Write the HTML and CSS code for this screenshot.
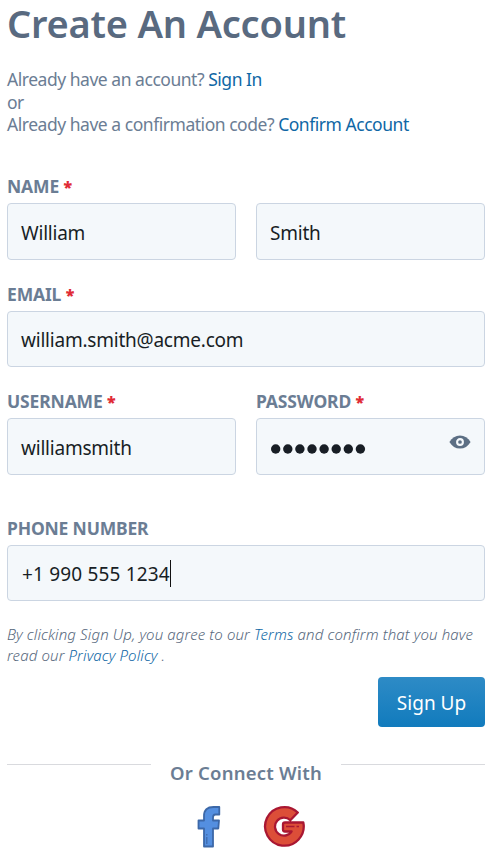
FILE: index.html
```html
<!DOCTYPE html>
<html lang="en">
<head>
<meta charset="utf-8">
<title>Create An Account</title>
<link rel="stylesheet" href="styles.css">
</head>
<body>
<main class="signup">
  <h1 class="title">Create An Account</h1>
  <p class="intro">Already have an account? <a href="#">Sign In</a><br>or<br>Already have a confirmation code? <a href="#">Confirm Account</a></p>
  <form class="form">
    <div class="row row-name">
      <div class="field"><label class="label">NAME <b>*</b></label><div class="input">William</div></div>
      <div class="field field-end"><div class="input">Smith</div></div>
    </div>
    <div class="field row-email"><label class="label">EMAIL <b>*</b></label><div class="input">william.smith@acme.com</div></div>
    <div class="row row-login">
      <div class="field"><label class="label">USERNAME <b>*</b></label><div class="input">williamsmith</div></div>
      <div class="field"><label class="label">PASSWORD <b>*</b></label>
        <div class="input input-password">
          <svg class="dots" width="98" height="12" viewBox="0 0 98 12" fill="#181e25"><circle cx="5.700" cy="6" r="4.700"/><circle cx="17.800" cy="6" r="4.700"/><circle cx="29.900" cy="6" r="4.700"/><circle cx="42" cy="6" r="4.700"/><circle cx="54.100" cy="6" r="4.700"/><circle cx="66.200" cy="6" r="4.700"/><circle cx="78.300" cy="6" r="4.700"/><circle cx="90.400" cy="6" r="4.700"/></svg>
          <svg class="eye" width="22" height="14" viewBox="0 0 22 14"><path d="M.4 7C3 2.700 6.500.4 11 .4S19 2.700 21.600 7C19 11.300 15.500 13.600 11 13.600S3 11.300.4 7Z" fill="#5c6f84"/><circle cx="11" cy="7" r="2.900" fill="none" stroke="#f4f8fb" stroke-width="2.100"/></svg>
        </div>
      </div>
    </div>
    <div class="field row-phone"><label class="label label-phone">PHONE NUMBER</label><div class="input input-phone"><span>+1 990 555 1234</span><span class="caret"></span></div></div>
    <p class="legal">By clicking Sign Up, you agree to our <a href="#">Terms</a> and confirm that you have<br>read our <a href="#">Privacy Policy</a> .</p>
    <button class="submit" type="button">Sign Up</button>
  </form>
  <div class="divider"><span>Or Connect With</span></div>
  <div class="social">
    <svg width="24" height="43" viewBox="0 0 24 43"><path d="M7 41.500V23.500H1.500V15.500H7V11Q7 2 16.500 2H22.300V9.500H18.500Q16 9.500 16 12.500V15.500H22L21.300 23.500H16V41.500Z" fill="#548fe0" stroke="#3c68a8" stroke-width="1.800" stroke-linejoin="round"/><path d="M9.800 29V30.500M9.800 32V39" stroke="#3c68a8" stroke-width="1.200"/></svg>
    <svg width="42" height="43" viewBox="0 0 42 43"><path d="M34.800 7.500A19.300 19.300 0 1 0 40.300 17.500H22Q20 17.500 20 19.500V24.500Q20 26.500 22 26.500H28.600A9 9 0 1 1 27.300 15.200Z" fill="#dc4e38" stroke="#a91732" stroke-width="2.300" stroke-linejoin="round"/><path d="M23 21.500H31.500M33.500 21.500H36" stroke="#a91732" stroke-width="1.700"/></svg>
  </div>
</main>
</body>
</html>
```
FILE: styles.css
```css
* { box-sizing: border-box; }
body { margin: 0; background: #fff; color: #6b7d94; font-family: "Noto Sans", sans-serif; }
a { color: #0f67a5; text-decoration: none; }
.signup { padding: 0 10px 0 7px; }
.title { margin: 0; height: 68px; line-height: 46px; font-size: 38px; font-weight: 600; color: #596a80; white-space: nowrap; letter-spacing: -.22px; }
.intro { margin: 0; height: 107px; line-height: 22.500px; font-size: 17.500px; white-space: nowrap; letter-spacing: -.47px; }
.row { display: grid; grid-template-columns: 229px 229px; gap: 20px; }
.field { display: flex; flex-direction: column; }
.field-end { justify-content: flex-end; }
.label { height: 28px; line-height: 22px; font-size: 17.500px; font-weight: 700; letter-spacing: -.15px; white-space: nowrap; }
.label b { color: #e02b35; font-size: 16px; line-height: 1; }
.label-phone { letter-spacing: -.18px; }
.input { display: flex; align-items: center; height: 57px; padding: 2px 13px 0; border: 1px solid #cbd5e2; border-radius: 4px; background: #f4f8fb; color: #181e25; font-size: 19px; letter-spacing: -.22px; }
.row-name { margin-bottom: 23px; }
.row-email { margin-bottom: 23px; }
.row-email .input { height: 56px; }
.row-login { margin-bottom: 42px; }
.input-password { justify-content: space-between; }
.dots { margin-top: 3px; }
.eye { margin-top: -11px; }
.input-phone { height: 56px; letter-spacing: .17px; padding-left: 14px; }
.caret { width: 1px; height: 27px; margin-top: -2px; background: #111; }
.legal { margin: 23px 0 11px; line-height: 21px; font-size: 15px; font-style: italic; font-weight: 300; color: #56677c; white-space: nowrap; letter-spacing: .13px; }
.submit { display: block; margin-left: auto; width: 107px; height: 50px; padding: 2px 0 0; border: 0; border-radius: 4px; background: linear-gradient(#2e8bc6, #117bbd); color: #fff; font: 19px "Noto Sans", sans-serif; }
.divider { display: flex; align-items: center; gap: 19px; margin-top: 33px; height: 26px; font-size: 18.500px; font-weight: 600; white-space: nowrap; letter-spacing: .2px; }
.divider span { margin-top: -2px; }
.divider::before, .divider::after { content: ""; flex: 1; height: 1px; margin-top: -17px; background: #d9dade; }
.social { display: flex; gap: 42px; margin: 19px 0 0 190px; }
```
